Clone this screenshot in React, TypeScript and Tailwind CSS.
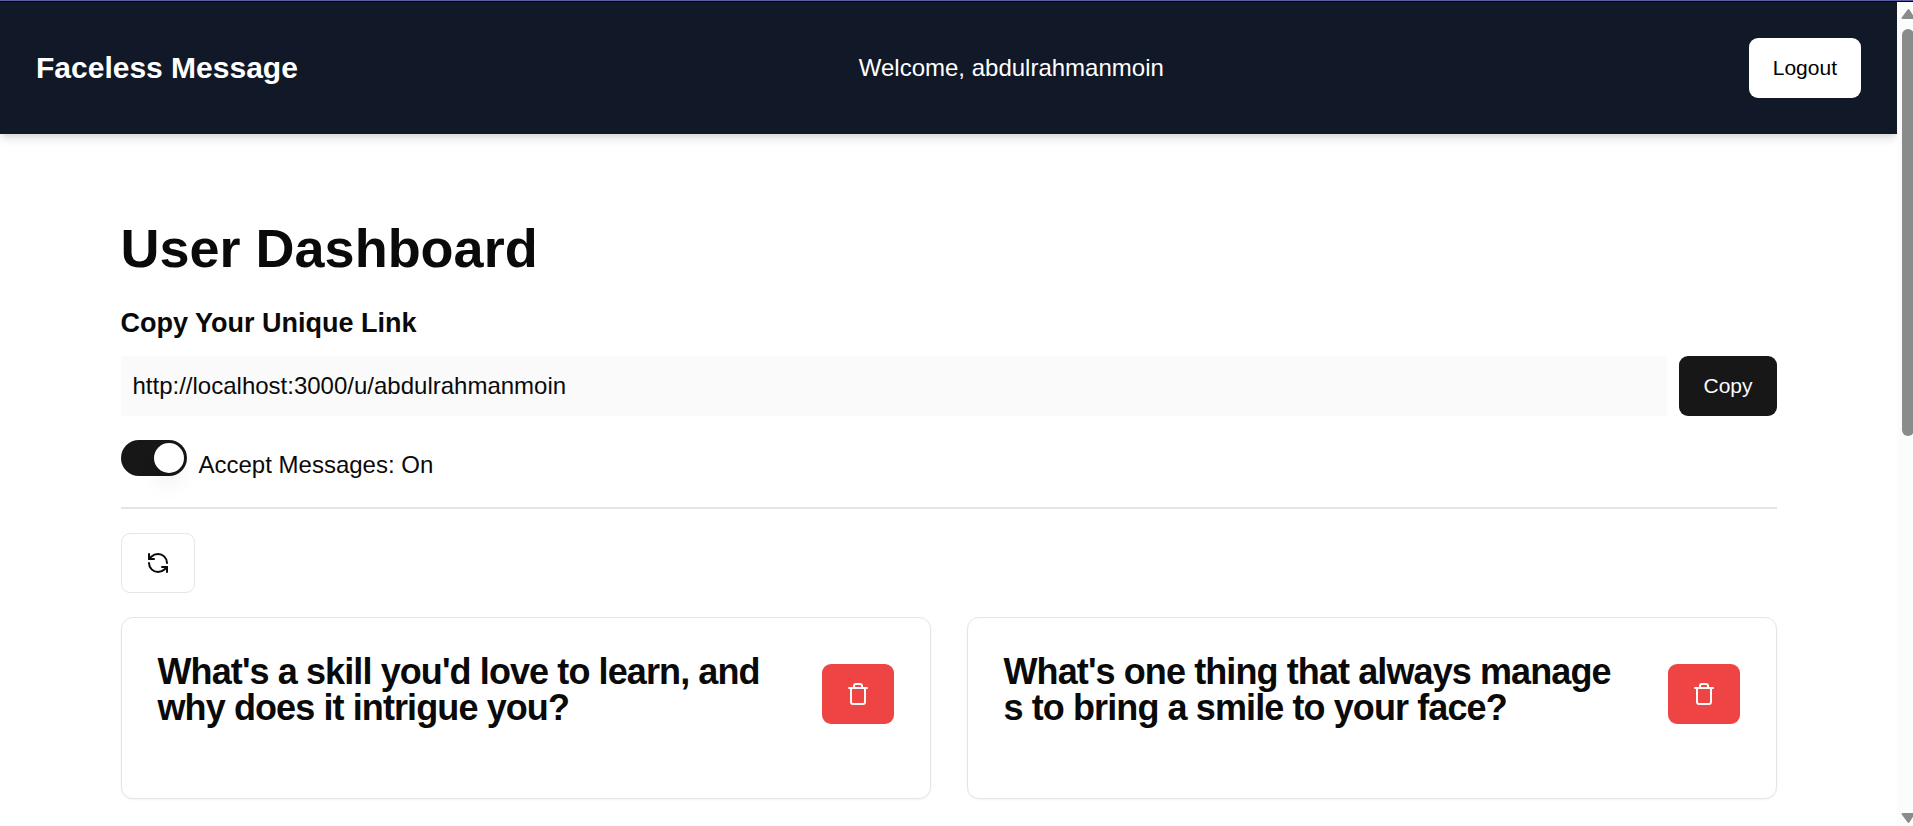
import { useState } from "react";
import { RefreshCcw, Trash } from "lucide-react";

const messages = [
  "What's a skill you'd love to learn, and why does it intrigue you?",
  "What's one thing that always manages to bring a smile to your face?",
];

const profileUrl = "http://localhost:3000/u/abdulrahmanmoin";

function Navbar() {
  return (
    <nav className="flex items-center justify-between bg-[#111827] p-9 text-white shadow-[0_6px_9px_-1px_rgba(0,0,0,0.1),0_3px_6px_-2px_rgba(0,0,0,0.1)]">
      <a href="#" className="text-[30px] leading-[42px] font-bold">
        Faceless Message
      </a>
      <span className="mr-6 text-2xl leading-9">Welcome, abdulrahmanmoin</span>
      <button
        type="button"
        className="h-[60px] rounded-[9px] bg-white px-6 text-[21px] leading-[30px] text-black"
      >
        Logout
      </button>
    </nav>
  );
}

function MessageCard({ text }: { text: string }) {
  return (
    <article className="rounded-xl border border-neutral-200 bg-white px-9 pt-9 pb-[72px] shadow-xs">
      <div className="flex items-center">
        <h3 className="flex-1 pr-12 text-4xl leading-9 font-bold tracking-tight break-all">
          {text}
        </h3>
        <button
          type="button"
          aria-label="Delete message"
          className="mt-2 flex h-[60px] w-[72px] shrink-0 items-center justify-center rounded-[9px] bg-[#ef4444] text-neutral-50"
        >
          <Trash className="size-6" />
        </button>
      </div>
    </article>
  );
}

function Scrollbar() {
  return (
    <div className="relative w-4 shrink-0 overflow-hidden bg-[#fcfcfc]" aria-hidden="true">
      <svg
        viewBox="0 0 14 11"
        className="absolute top-1.5 left-1 h-[11px] w-[14px]"
        fill="#8b8b8b"
        stroke="#8b8b8b"
        strokeWidth="2"
        strokeLinejoin="round"
      >
        <path d="M7.500 2 L12.500 10 H1.500 Z" />
      </svg>
      <div className="absolute top-[27px] left-[5px] h-[407px] w-3 rounded-full bg-[#8b8b8b]" />
      <svg
        viewBox="0 0 14 11"
        className="absolute bottom-0.5 left-1 h-[11px] w-[14px]"
        fill="#8b8b8b"
        stroke="#8b8b8b"
        strokeWidth="2"
        strokeLinejoin="round"
      >
        <path d="M7.500 9 L12.500 1 H1.500 Z" />
      </svg>
    </div>
  );
}

export default function App() {
  const [accepting, setAccepting] = useState(true);

  return (
    <div className="flex min-h-screen flex-col bg-white font-['Liberation_Sans',Arial,sans-serif] text-neutral-950">
      <div className="h-0.5 border-t border-[#5b5ea6] bg-black" />
      <div className="flex flex-1">
        <div className="min-w-0 flex-1">
          <Navbar />
          <main className="mx-auto mt-12 max-w-[1728px] px-9 pt-9 pb-6">
            <h1 className="mb-6 text-[54px] leading-[60px] font-bold">User Dashboard</h1>
            <label
              htmlFor="profile-link"
              className="mb-3 block text-[27px] leading-[42px] font-bold"
            >
              Copy Your Unique Link
            </label>
            <div className="mb-6 flex gap-3">
              <input
                id="profile-link"
                type="text"
                readOnly
                value={profileUrl}
                className="h-[60px] min-w-0 flex-1 bg-neutral-50 px-3 text-2xl leading-9 outline-none"
              />
              <button
                type="button"
                className="h-[60px] rounded-[9px] bg-neutral-900 px-6 text-[21px] leading-[30px] text-neutral-50"
              >
                Copy
              </button>
            </div>
            <div className="mb-6 flex h-[43px] items-end gap-3">
              <button
                id="accept-messages"
                type="button"
                role="switch"
                aria-checked={accepting}
                onClick={() => setAccepting(!accepting)}
                className={
                  accepting
                    ? "flex h-9 w-[66px] items-center justify-end self-start rounded-full bg-neutral-900 p-[3px]"
                    : "flex h-9 w-[66px] items-center justify-start self-start rounded-full bg-neutral-200 p-[3px]"
                }
              >
                <span className="size-[30px] rounded-full bg-white shadow-[0_15px_23px_-5px_rgba(0,0,0,0.1),0_6px_9px_-6px_rgba(0,0,0,0.1)]" />
              </button>
              <label htmlFor="accept-messages" className="text-2xl leading-9">
                Accept Messages: {accepting ? "On" : "Off"}
              </label>
            </div>
            <hr className="h-0.5 border-0 bg-neutral-200" />
            <button
              type="button"
              aria-label="Refresh messages"
              className="mt-6 flex h-[60px] w-[74px] items-center justify-center rounded-[9px] border border-neutral-200 bg-white"
            >
              <RefreshCcw className="size-6" />
            </button>
            <div className="mt-6 grid grid-cols-2 gap-9">
              {messages.map((text) => (
                <MessageCard key={text} text={text} />
              ))}
            </div>
          </main>
        </div>
        <Scrollbar />
      </div>
    </div>
  );
}
